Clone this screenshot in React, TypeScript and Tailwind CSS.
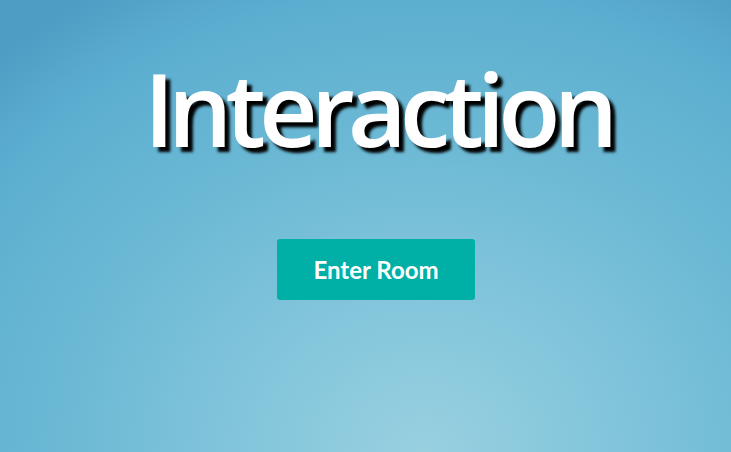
export default function App() {
  return (
    <div className="w-[731px] h-[452px] overflow-hidden flex flex-col items-center bg-[radial-gradient(ellipse_85%_120%_at_58%_100%,#98d0e0_0%,#82c5db_30%,#6ab8d4_60%,#5caed0_85%,#4e9dc4_100%)]">
      <h1 className="mt-[48px] ml-[24px] text-white text-[102px] leading-[120px] font-semibold tracking-[-7px] font-['Open_Sans',_'Noto_Sans',_sans-serif] [text-shadow:5px_5px_3px_#000]">
        Interaction
      </h1>
      <button className="mt-[71px] ml-[21px] w-[198px] h-[61px] rounded-[3px] bg-[#00b0a6] text-white text-[24px] font-bold font-['Lato',_'Open_Sans',_sans-serif]">
        Enter Room
      </button>
    </div>
  );
}
